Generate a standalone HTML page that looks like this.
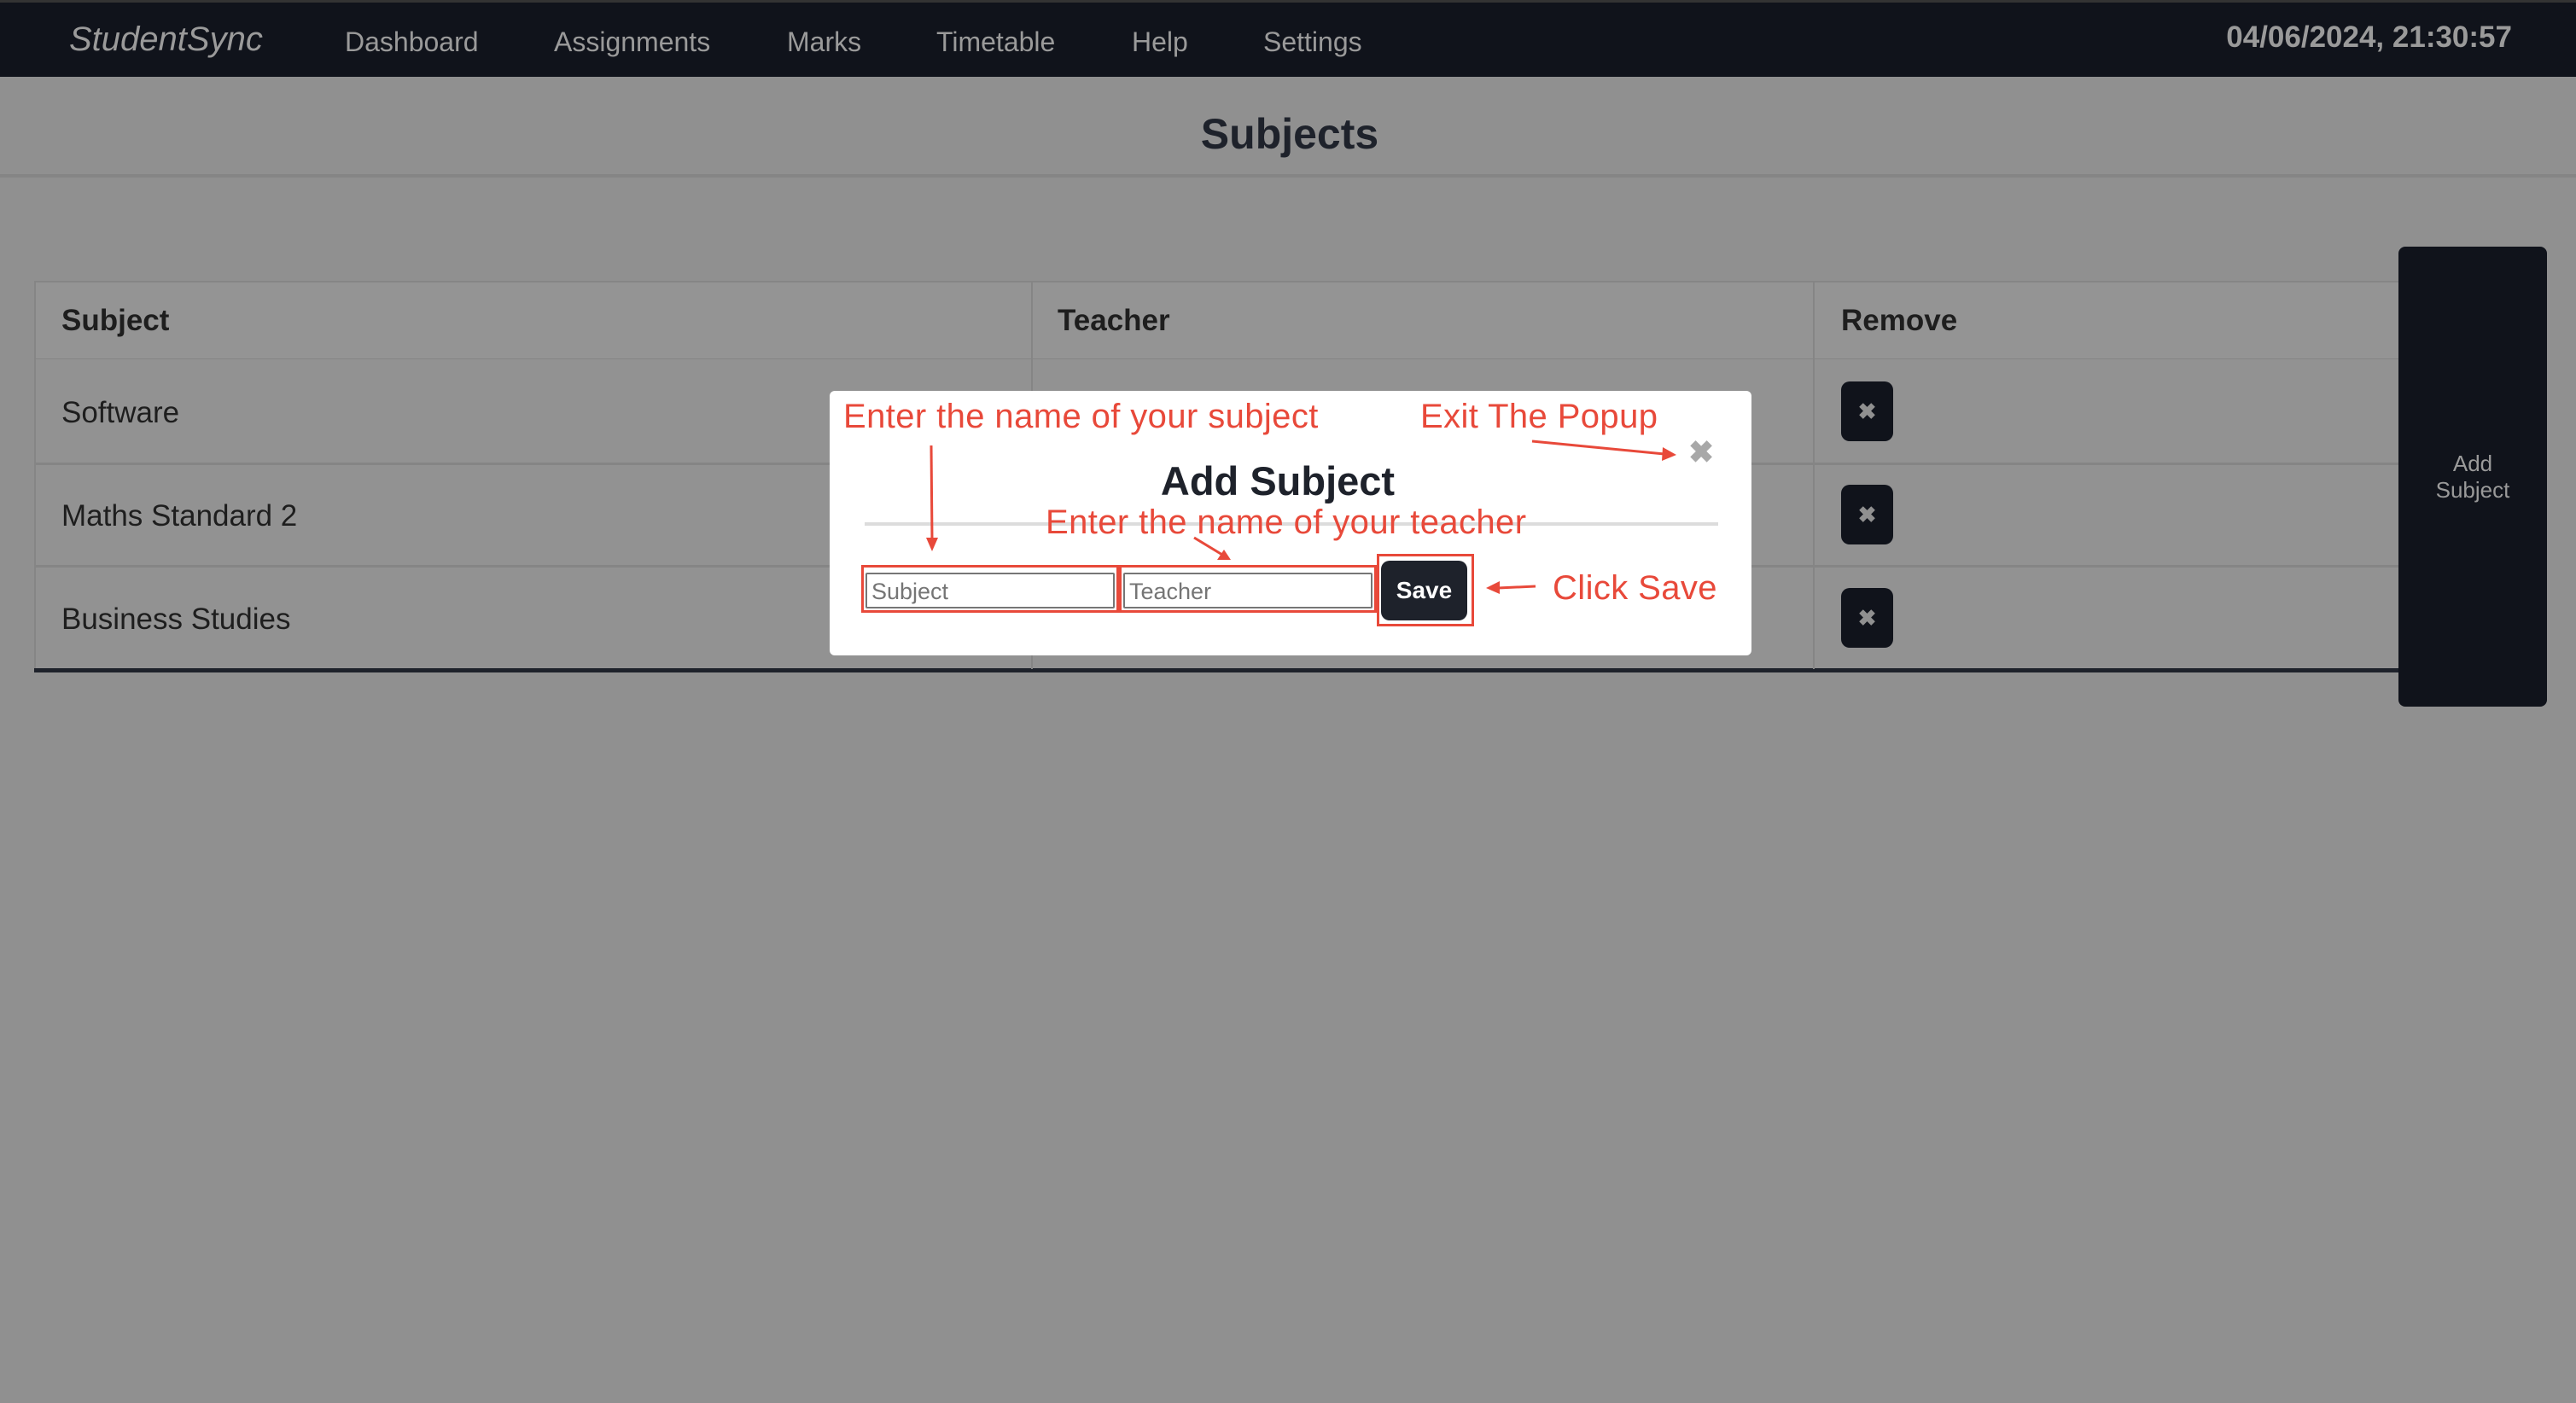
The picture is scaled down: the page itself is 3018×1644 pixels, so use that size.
<!DOCTYPE html>
<html><head><meta charset="utf-8"><style>
*{margin:0;padding:0;box-sizing:border-box}
body{width:3018px;height:1644px;background:#909090;font-family:"Liberation Sans",sans-serif;position:relative;overflow:hidden}
.a{position:absolute;white-space:nowrap}
.nav{left:0;top:0;width:3018px;height:90px;background:#10131b;border-top:3px solid #333}
.nl{color:#9a9a9a;font-size:32px;top:31px}
.red{color:#e8493a;font-size:40px}
.rm{width:61px;height:70px;background:#10131b;border-radius:10px;color:#909090;font-size:26px;text-align:center;line-height:70px;font-weight:bold}
</style></head><body>
<div class="a nav"></div>
<div class="a" style="left:81px;top:24px;font-size:40px;font-style:italic;color:#9a9a9a">StudentSync</div>
<div class="a nl" style="left:404px">Dashboard</div>
<div class="a nl" style="left:649px">Assignments</div>
<div class="a nl" style="left:922px">Marks</div>
<div class="a nl" style="left:1097px">Timetable</div>
<div class="a nl" style="left:1326px">Help</div>
<div class="a nl" style="left:1480px">Settings</div>
<div class="a" style="right:75px;top:24px;font-size:35px;font-weight:bold;color:#9a9a9a">04/06/2024, 21:30:57</div>
<div class="a" style="left:0;width:3018px;top:128px;text-align:center;font-size:50px;font-weight:bold;color:#1e222b;padding-left:4px">Subjects</div>
<div class="a" style="left:0;top:204px;width:3018px;height:4px;background:#858585"></div>

<div class="a" style="left:40px;top:329px;width:2772px;height:93px;background:#949494;border:2px solid #858585"></div>
<div class="a" style="left:40px;top:421px;width:2772px;height:364px;border-left:2px solid #858585;background:#929292"></div>
<div class="a" style="left:40px;top:542px;width:2772px;height:3px;background:#858585"></div>
<div class="a" style="left:40px;top:662px;width:2772px;height:3px;background:#858585"></div>
<div class="a" style="left:40px;top:783px;width:2772px;height:5px;background:#1e222b"></div>
<div class="a" style="left:1208px;top:329px;width:2px;height:455px;background:#858585"></div>
<div class="a" style="left:2124px;top:329px;width:2px;height:455px;background:#858585"></div>
<div class="a" style="left:72px;top:356px;font-size:35px;font-weight:bold;color:#1e1e1e">Subject</div>
<div class="a" style="left:1239px;top:356px;font-size:35px;font-weight:bold;color:#1e1e1e">Teacher</div>
<div class="a" style="left:2157px;top:356px;font-size:35px;font-weight:bold;color:#1e1e1e">Remove</div>
<div class="a" style="left:72px;top:464px;font-size:35px;color:#1e1e1e">Software</div>
<div class="a" style="left:72px;top:585px;font-size:35px;color:#1e1e1e">Maths Standard 2</div>
<div class="a" style="left:72px;top:706px;font-size:35px;color:#1e1e1e">Business Studies</div>
<div class="a rm" style="left:2157px;top:447px">✖</div>
<div class="a rm" style="left:2157px;top:568px">✖</div>
<div class="a rm" style="left:2157px;top:689px">✖</div>

<div class="a" style="left:2810px;top:289px;width:174px;height:539px;background:#10131b;border-radius:8px;color:#9a9a9a;font-size:26px;text-align:center;padding-top:239px;line-height:31px;white-space:normal">Add<br>Subject</div>

<div class="a" style="left:972px;top:458px;width:1080px;height:310px;background:#fff;border-radius:6px"></div>
<div class="a red" style="left:988px;top:466px;letter-spacing:0.4px">Enter the name of your subject</div>
<div class="a red" style="left:1664px;top:466px;letter-spacing:0.4px">Exit The Popup</div>
<div class="a" style="left:1978px;top:509px;font-size:36px;font-weight:bold;color:#a8a8a8">✖</div>
<div class="a" style="left:0;width:2994px;top:536px;text-align:center;font-size:47px;font-weight:bold;color:#1e222b">Add Subject</div>
<div class="a" style="left:1013px;top:612px;width:1000px;height:4px;background:#dcdcdc"></div>
<div class="a red" style="left:1225px;top:590px;letter-spacing:0.4px">Enter the name of your teacher</div>
<div class="a" style="left:1009px;top:662px;width:302px;height:56px;border:3px solid #e8493a"></div>
<div class="a" style="left:1311px;top:662px;width:302px;height:56px;border:3px solid #e8493a"></div>
<div class="a" style="left:1014px;top:671px;width:292px;height:42px;border:2px solid #767676;border-radius:2px;font-size:27px;color:#757575;padding:5px 0 0 5px">Subject</div>
<div class="a" style="left:1316px;top:671px;width:292px;height:42px;border:2px solid #767676;border-radius:2px;font-size:27px;color:#757575;padding:5px 0 0 5px">Teacher</div>
<div class="a" style="left:1613px;top:649px;width:114px;height:85px;border:3px solid #e8493a"></div>
<div class="a" style="left:1618px;top:657px;width:101px;height:70px;background:#1e222b;border-radius:10px;color:#fff;font-size:28px;font-weight:bold;text-align:center;line-height:70px">Save</div>
<div class="a red" style="left:1819px;top:667px;letter-spacing:0.4px">Click Save</div>
<svg class="a" style="left:0;top:0" width="3018" height="1644">
<g stroke="#e8493a" stroke-width="3" fill="#e8493a">
<line x1="1091" y1="522" x2="1092" y2="632"/><polygon points="1085,630 1099,630 1092,646" stroke="none"/>
<line x1="1399" y1="630" x2="1432" y2="650"/><polygon points="1426,656 1434,644 1442,656" stroke="none"/>
<line x1="1795" y1="517" x2="1950" y2="532"/><polygon points="1948,524 1964,533 1947,540" stroke="none"/>
<line x1="1799" y1="687" x2="1755" y2="689"/><polygon points="1757,681 1741,689 1757,696" stroke="none"/>
</g></svg>
</body></html>
